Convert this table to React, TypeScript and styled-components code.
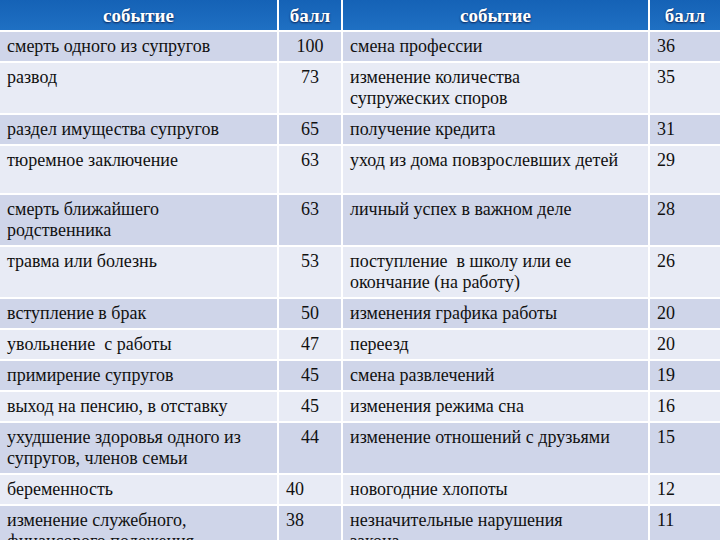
import React from 'react';
import styled, { createGlobalStyle } from 'styled-components';

type Row = {
  event1: string[];
  score1: string;
  event2: string[];
  score2: string;
  height: number;
  left?: boolean;
};

const rows: Row[] = [
  { event1: ['смерть одного из супругов'], score1: '100', event2: ['смена профессии'], score2: '36', height: 31 },
  { event1: ['развод'], score1: '73', event2: ['изменение количества', 'супружеских споров'], score2: '35', height: 51 },
  { event1: ['раздел имущества супругов'], score1: '65', event2: ['получение кредита'], score2: '31', height: 30 },
  { event1: ['тюремное заключение'], score1: '63', event2: ['уход из дома повзрослевших детей'], score2: '29', height: 49 },
  { event1: ['смерть ближайшего', 'родственника'], score1: '63', event2: ['личный успех в важном деле'], score2: '28', height: 52 },
  { event1: ['травма или болезнь'], score1: '53', event2: ['поступление \u00a0в школу или ее', 'окончание (на работу)'], score2: '26', height: 51 },
  { event1: ['вступление в брак'], score1: '50', event2: ['изменения графика работы'], score2: '20', height: 31 },
  { event1: ['увольнение \u00a0с работы'], score1: '47', event2: ['переезд'], score2: '20', height: 31 },
  { event1: ['примирение супругов'], score1: '45', event2: ['смена развлечений'], score2: '19', height: 31 },
  { event1: ['выход на пенсию, в отставку'], score1: '45', event2: ['изменения режима сна'], score2: '16', height: 31 },
  { event1: ['ухудшение здоровья одного из', 'супругов, членов семьи'], score1: '44', event2: ['изменение отношений с друзьями'], score2: '15', height: 52 },
  { event1: ['беременность'], score1: '40', event2: ['новогодние хлопоты'], score2: '12', height: 31, left: true },
  { event1: ['изменение служебного,', 'финансового положения'], score1: '38', event2: ['незначительные нарушения', 'закона'], score2: '11', height: 52, left: true },
];

const GlobalStyle = createGlobalStyle`
  html, body {
    margin: 0;
    padding: 0;
    background: #ffffff;
    overflow: hidden;
  }
`;

const Page = styled.div`
  width: 720px;
  height: 540px;
  overflow: hidden;
`;

const Table = styled.table`
  width: 720px;
  border-collapse: collapse;
  table-layout: fixed;
  font-family: "Liberation Serif", "DejaVu Serif", "Times New Roman", serif;
  font-size: 18px;
  line-height: 21px;
  color: #111111;
`;

const HeadCell = styled.th`
  height: 30px;
  padding: 0 6px;
  background: linear-gradient(#1562b6, #1f70c3);
  color: #ffffff;
  font-weight: bold;
  font-size: 19px;
  text-align: center;
  vertical-align: middle;
  text-shadow: 0 1px 2px rgba(0, 0, 40, 0.75);
  border-right: 2px solid #ffffff;
  border-bottom: 2px solid #ffffff;
  &:last-child {
    border-right: none;
  }
`;

const BodyRow = styled.tr<{ $dark: boolean; $h: number }>`
  height: ${p => p.$h}px;
  background: ${p => (p.$dark ? '#cfd5e9' : '#e8ebf5')};
`;

const Cell = styled.td<{ $align?: 'left' | 'center' }>`
  padding: 4px 7px;
  vertical-align: top;
  text-align: ${p => p.$align || 'left'};
  white-space: nowrap;
  border-right: 2px solid #ffffff;
  border-bottom: 2px solid #ffffff;
  &:last-child {
    border-right: none;
  }
`;

const Line = styled.span`
  display: block;
`;

const Lines: React.FC<{ lines: string[] }> = ({ lines }) => (
  <>
    {lines.map((l, i) => <Line key={i}>{l}</Line>)}
  </>
);

const App: React.FC = () => {
  return <>
    <GlobalStyle />
    <Page>
      <Table>
        <colgroup>
          <col style={{ width: 278 }} />
          <col style={{ width: 64 }} />
          <col style={{ width: 307 }} />
          <col style={{ width: 71 }} />
        </colgroup>
        <thead>
          <tr>
            <HeadCell>событие</HeadCell>
            <HeadCell>балл</HeadCell>
            <HeadCell>событие</HeadCell>
            <HeadCell>балл</HeadCell>
          </tr>
        </thead>
        <tbody>
          {rows.map((r, i) => (
            <BodyRow key={i} $dark={i % 2 === 0} $h={r.height}>
              <Cell><Lines lines={r.event1} /></Cell>
              <Cell $align={r.left ? 'left' : 'center'}>{r.score1}</Cell>
              <Cell><Lines lines={r.event2} /></Cell>
              <Cell>{r.score2}</Cell>
            </BodyRow>
          ))}
        </tbody>
      </Table>
    </Page>
  </>;
};

export default App;
